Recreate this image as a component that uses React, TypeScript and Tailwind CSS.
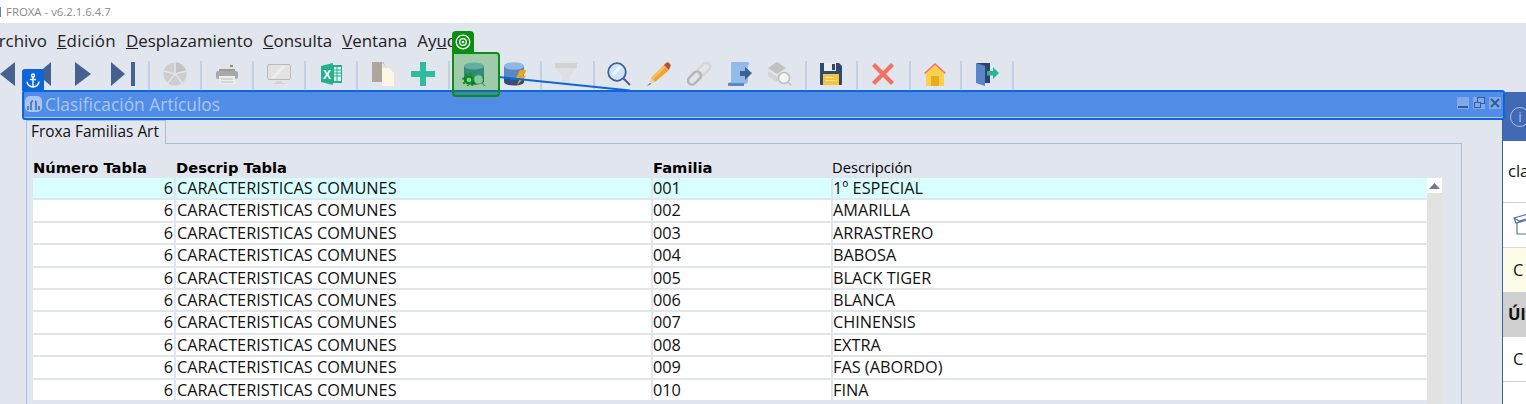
import React from "react";

const rows = [
  ["001", "1º ESPECIAL"],
  ["002", "AMARILLA"],
  ["003", "ARRASTRERO"],
  ["004", "BABOSA"],
  ["005", "BLACK TIGER"],
  ["006", "BLANCA"],
  ["007", "CHINENSIS"],
  ["008", "EXTRA"],
  ["009", "FAS (ABORDO)"],
  ["010", "FINA"],
];

const C = "#44618f";
const OPEN = { fontFamily: '"Open Sans", sans-serif' };
const DEJA = { fontFamily: '"DejaVu Sans", sans-serif' };

const Sep = ({ className }: { className: string }) => (
  <div className={`w-[2px] h-[28px] bg-[#c3cfe4] shrink-0 ${className}`} />
);

const Icon = ({ className, children }: { className: string; children: React.ReactNode }) => (
  <svg width="24" height="24" viewBox="0 0 24 24" fill="none" className={`shrink-0 -mt-[2px] ${className}`}>
    {children}
  </svg>
);

const Toolbar = () => (
  <div className="h-[31px] flex items-center -ml-[4px] shrink-0">
    <Icon className="">
      <path d="M19 0v24L4 12z" fill={C} />
    </Icon>
    <Icon className="ml-[12px]">
      <path d="M19 0v24L5 12z" fill={C} />
    </Icon>
    <Icon className="ml-[15px]">
      <path d="M4 0v24l16-12z" fill={C} />
    </Icon>
    <Icon className="ml-[16px]">
      <path d="M0 0v24l14-12z" fill={C} />
      <rect x="20" y="0" width="4" height="24" fill={C} />
    </Icon>
    <Sep className="ml-[13px]" />
    <Icon className="ml-[13px]">
      <circle cx="12" cy="12" r="11.500" fill="#cdcdcd" />
      <path d="M12 12V.5A11.500 11.500 0 0 1 23 9z" fill="#c2c2c2" />
      <path d="M12 12V0M12 12l11-3M12 12l8 10M12 12L4 22M12 12L1 9" stroke="#e1e5ee" strokeWidth="1.500" />
    </Icon>
    <Sep className="ml-[13px]" />
    <Icon className="ml-[13px]">
      <path d="M5 2h14v6H5z" fill="#e2e2e2" />
      <path d="M4 8h16" stroke="#9a9a9a" strokeWidth="2" />
      <rect x="1" y="9" width="22" height="8" rx="2" fill="#a8a8a8" />
      <rect x="15" y="3" width="3" height="2" fill="#8e8e8e" />
      <rect x="4" y="14" width="16" height="8" fill="#ececec" />
      <path d="M6 17h12M6 20h12" stroke="#bdbdbd" />
    </Icon>
    <Sep className="ml-[13px]" />
    <Icon className="ml-[13px]">
      <rect x=".5" y="2.500" width="23" height="15" rx="1.500" fill="#e3e3e3" stroke="#b9b9b9" />
      <path d="M4 16L15 4h4L8 16z" fill="#eeeeee" />
      <rect x="9" y="19" width="6" height="2" fill="#d4d4d4" />
      <rect x="6" y="21" width="12" height="1" fill="#d4d4d4" />
    </Icon>
    <Sep className="ml-[13px]" />
    <Icon className="ml-[13px]">
      <path d="M2 4l12-3v22L2 20z" fill="#23b08e" />
      <rect x="13" y="3" width="10" height="18" fill="#23b08e" />
      <rect x="15" y="5" width="7" height="14" fill="#e6f7f2" />
      <path d="M15 8h7M15 11h7M15 14h7M18 5v14" stroke="#23b08e" />
      <text x="4" y="16.500" fontSize="12" fontWeight="700" fill="#fff" fontFamily="Liberation Sans, sans-serif">X</text>
    </Icon>
    <Sep className="ml-[13px]" />
    <Icon className="ml-[13px]">
      <path d="M1 0h11l3 5v15H1z" fill="#aea69d" />
      <path d="M11 6h7l5 5v13H11z" fill="#fdf6e3" />
      <path d="M11 0l4 5v1h-4z" fill="#e1e5ee" />
    </Icon>
    <Icon className="ml-[16px]">
      <path d="M9 0h6v9h9v6h-9v9H9v-9H0V9h9z" fill="#30bb9f" />
    </Icon>
    <Sep className="ml-[13px]" />
    <Icon className="ml-[12px]">
      <path d="M2 4v15c0 2 5 3.500 10 3.500S22 21 22 19V4z" fill="#4a87a8" />
      <path d="M2 14c0 2 5 3.500 10 3.500S22 16 22 14v5c0 2-5 3.500-10 3.500S2 21 2 19z" fill="#1f4b78" />
      <ellipse cx="12" cy="4" rx="10" ry="3.500" fill="#86bde0" />
      <circle cx="7" cy="18" r="3.500" stroke="#0d8f1a" strokeWidth="2.500" fill="#cbe8c9" />
      <circle cx="7" cy="18" r="6" stroke="#0d8f1a" strokeWidth="1.800" strokeDasharray="2 2.700" />
      <circle cx="16.500" cy="17.500" r="4.500" fill="#b5ead0" stroke="#74b89a" />
      <path d="M20 21l3 3" stroke="#6d9d86" strokeWidth="1.300" />
    </Icon>
    <Icon className="ml-[16px]">
      <path d="M2 4v16c0 2 4 3.500 10 3.500S22 22 22 20V4z" fill="#33507c" />
      <path d="M2 4v10c0 2 4 3.500 10 3.500S22 16 22 14V4z" fill="#5d87c4" />
      <ellipse cx="12" cy="4" rx="10" ry="3.800" fill="#90b8e4" />
      <path d="M18 8h7l-4 6h3l-9 9 3-7h-4z" fill="#e9a71e" />
    </Icon>
    <Sep className="ml-[14px]" />
    <Icon className="ml-[12px]">
      <path d="M1 1h22v5l-7 7v9H8v-9L1 6z" fill="#dedfe2" />
      <rect x="1" y="1" width="22" height="5" fill="#d2d2d2" />
    </Icon>
    <Sep className="ml-[15px]" />
    <Icon className="ml-[12px]">
      <circle cx="10" cy="10" r="8.800" fill="#cfe4f8" stroke="#3f618f" strokeWidth="1.800" />
      <path d="M16.500 16.500l6.500 6.500" stroke="#3f618f" strokeWidth="2" />
      <path d="M5 12l7-8 3 1-8 9z" fill="#eef6fd" />
    </Icon>
    <Icon className="ml-[16px]">
      <path d="M4 16L17 3l5 5L8 20z" fill="#f0a332" />
      <path d="M4 16L17 3l2 2L6 18z" fill="#f6bf5a" />
      <path d="M17 3l2-2c1-1 2-1 3 0l1 1c1 1 1 2 0 3l-1 3z" fill="#b94e3e" />
      <path d="M4 16l4 4-5 2z" fill="#e8cfa8" />
      <path d="M0 24l3-3 1 1z" fill="#555" />
    </Icon>
    <Icon className="ml-[16px]">
      <rect x="10" y="3" width="14" height="8" rx="4" transform="rotate(-45 17 7)" stroke="#d6d6d6" strokeWidth="2.500" />
      <rect x="0" y="12" width="15" height="8" rx="4" transform="rotate(-45 7.500 16)" stroke="#b5b5b5" strokeWidth="2.500" />
    </Icon>
    <Icon className="ml-[17px]">
      <path d="M3 0h17l2 2-2 1v16c0 2-1 3-3 3H0c0-1 1-2 3-2z" fill="#93bae8" />
      <path d="M0 21h16v3H0z" fill="#5b87c5" />
      <path d="M12 9h5V5l7 6-7 7v-4h-5z" fill="#3f618f" />
    </Icon>
    <Icon className="ml-[16px]">
      <path d="M9 0l9 6-9 6-9-6z" fill="#c0c0c0" />
      <path d="M0 9l9 6 3-2v5l-3 2-9-6zM0 11" fill="#d4d4d4" />
      <circle cx="16" cy="16" r="5.500" fill="#f5f5f5" stroke="#bdbdbd" strokeWidth="1.500" />
      <path d="M20 20l3.500 3.500" stroke="#bdbdbd" strokeWidth="1.500" />
    </Icon>
    <Sep className="ml-[13px]" />
    <Icon className="ml-[12px]">
      <path d="M1 1h19l3 3v18a1 1 0 0 1-1 1H2a1 1 0 0 1-1-1z" fill="#32496e" />
      <rect x="5" y="1" width="12" height="8" fill="#ededed" />
      <rect x="13" y="2" width="3" height="6" fill="#32496e" />
      <rect x="4" y="12" width="16" height="11" fill="#f4c63f" />
      <rect x="6" y="15" width="9" height="1" fill="#fbe9a8" />
      <rect x="6" y="18" width="11" height="1" fill="#fbe9a8" />
    </Icon>
    <Sep className="ml-[13px]" />
    <Icon className="ml-[13px]">
      <path d="M4 1l8 8 8-8 3 3-8 8 8 8-3 3-8-8-8 8-3-3 8-8-8-8z" fill="#f07263" />
    </Icon>
    <Sep className="ml-[14px]" />
    <Icon className="ml-[12px]">
      <path d="M3 11v13h18V11L12 2z" fill="#fdd14d" />
      <path d="M1 11L12 1l11 10-1 1L12 3 2 12z" fill="#f07263" />
      <rect x="8" y="14" width="8" height="10" fill="#e4ae20" />
    </Icon>
    <Sep className="ml-[13px]" />
    <Icon className="ml-[13px]">
      <rect x="2" y="1" width="13" height="20" fill="#2f4468" />
      <path d="M1 1l9 3v20l-9-3z" fill="#5a85c8" />
      <path d="M12 9h6V5l6 6-6 6v-3.500h-6z" fill="#2ab798" />
    </Icon>
    <Sep className="ml-[13px]" />
  </div>
);

const Cell = ({ className = "", children }: { className?: string; children?: React.ReactNode }) => (
  <div className={`h-[20.400px] leading-[21px] overflow-hidden whitespace-nowrap ${className}`}>{children}</div>
);

export default function App() {
  return (
    <div
      className="relative w-[1526px] h-[404px] overflow-hidden bg-[#e1e5ee] flex flex-col text-black"
      style={OPEN}
    >
      {/* title */}
      <div className="h-[23px] bg-white flex items-center text-[11.400px] text-[#8a8a8a] shrink-0">
        <div className="w-[1px] h-[10px] bg-[#5a85c8] mr-[5px]" />
        <span>FROXA - v6.2.1.6.4.7</span>
      </div>

      {/* menu */}
      <div className="h-[36px] flex items-center text-[16.900px] text-[#222] shrink-0 -ml-[12px] gap-[10px] whitespace-nowrap">
        <span><u>A</u>rchivo</span>
        <span className="tracking-[0.3px]"><u>E</u>dición</span>
        <span><u>D</u>esplazamiento</span>
        <span><u>C</u>onsulta</span>
        <span><u>V</u>entana</span>
        <span>Ay<u>u</u>da</span>
      </div>

      <Toolbar />

      {/* body */}
      <div className="flex flex-1 min-h-0 items-start pl-[22px]">
        <div className="w-[1480px] shrink-0 flex flex-col h-full min-h-0 relative">
          <div className="h-[30px] -mr-[3px] bg-[#518ce6] border-[2px] border-[#0d65dc] rounded-[3px] shadow-[inset_0_-1px_0_#a9c9f7] flex items-center shrink-0 relative z-10">
            <svg width="17" height="16" viewBox="0 0 17 16" className="ml-[1px] mr-[3px] -mt-[2px]" fill="none">
              <rect width="17" height="16" rx="5" fill="#a9c6f2" />
              <path d="M3 14v-4M6 14V8c0-2 1-3 2-3M11 14V7c0-1 0-2-1-2M14 14v-4" stroke="#3e6db5" strokeWidth="1.600" />
            </svg>
            <span className="text-[17.400px] text-[#a8c7f6] -mt-[2px]">Clasificación Artículos</span>
            <div className="ml-auto flex gap-[4px] mr-[2px] -mt-[4px]">
              <div className="w-[12px] h-[12px] bg-[#82a8e8] flex items-end justify-center"><div className="w-[10px] h-[2px] bg-[#2f5da3] mb-[1px]" /></div>
              <div className="w-[12px] h-[12px] bg-[#82a8e8] relative">
                <div className="absolute right-[0px] top-[0px] w-[8px] h-[7px] border border-[#2f5da3]" />
                <div className="absolute left-[1px] bottom-[1px] w-[7px] h-[6px] border border-[#2f5da3] bg-[#82a8e8]" />
              </div>
              <div className="w-[12px] h-[12px] bg-[#82a8e8] flex items-center justify-center">
                <svg width="10" height="10" viewBox="0 0 10 10"><path d="M1 1l8 8M9 1l-8 8" stroke="#2f5da3" strokeWidth="2" /></svg>
              </div>
            </div>
          </div>

          {/* tab */}
          <div className="pl-[4px] flex-1 min-h-0 flex flex-col w-[1440px]">
            <div className="h-[24px] flex shrink-0">
              <div className="w-[140px] border border-b-0 border-[#a6bfdb] text-[15.400px] leading-[22px] pl-[4px] text-[#111] whitespace-nowrap">
                Froxa Familias Art
              </div>
              <div className="flex-1 border-b border-[#a6bfdb]" />
            </div>
            <div className="flex-1 border-l border-r border-[#a6bfdb] min-h-0 pl-[6px] overflow-hidden flex flex-col">
              <div className="h-[34px] pb-[1px] flex items-end shrink-0 leading-[18px] whitespace-nowrap">
                <div className="w-[143px] font-bold text-[14.700px] shrink-0" style={DEJA}>Número Tabla</div>
                <div className="w-[477px] font-bold text-[14.700px] shrink-0" style={DEJA}>Descrip Tabla</div>
                <div className="w-[179px] font-bold text-[14.700px] shrink-0" style={DEJA}>Familia</div>
                <div className="text-[14.700px] mb-[1px]">Descripción</div>
              </div>
              <div className="flex flex-1 min-h-0">
                <div className="w-[1394px] shrink-0 flex flex-col gap-[2px] text-[16.300px]">
                  {rows.map((r, i) => {
                    const bg = i === 0 ? "bg-[#d8fefe]" : "bg-white";
                    return (
                      <div key={r[0]} className="flex gap-[2px] shrink-0 text-[#111]">
                        <Cell className={`w-[141px] text-right pr-[1px] ${bg}`}>6</Cell>
                        <Cell className={`w-[475px] pl-[1px] ${bg}`}>CARACTERISTICAS COMUNES</Cell>
                        <Cell className={`w-[178px] ${bg}`}>{r[0]}</Cell>
                        <Cell className={`flex-1 ${bg}`}>{r[1]}</Cell>
                      </div>
                    );
                  })}
                </div>
                <div className="w-[15px] bg-[#e2e2e2] shrink-0">
                  <div className="h-[15px] bg-white flex items-center justify-center">
                    <svg width="11" height="6" viewBox="0 0 11 6"><path d="M0 6L5.500 0 11 6z" fill="#6f7a92" /></svg>
                  </div>
                </div>
              </div>
            </div>
          </div>
        </div>

        {/* right panel */}
        <div className="flex-1 min-w-0 h-[312px] mt-[2px] border-l-[1px] border-[#44618f] bg-white flex flex-col overflow-hidden text-[16.500px] text-[#111] whitespace-nowrap">
          <div className="h-[49px] bg-[#4169b4] shrink-0 flex items-center pl-[7px]">
            <div className="w-[20px] h-[20px] shrink-0 rounded-full border border-[#a8c0e4] text-[#a8c0e4] text-[14px] flex items-center justify-center">i</div>
          </div>
          <div className="h-[62px] shrink-0 pl-[5px] flex items-center border-b border-[#cfcfcf]">cla</div>
          <div className="h-[45px] shrink-0 pl-[10px] flex items-center border-b border-[#dcdcdc]">
            <svg width="20" height="26" viewBox="0 0 20 26" className="shrink-0" fill="none" stroke="#5a72a5" strokeWidth="1.200"><path d="M1 6l14-4 5 3-14 4zM1 6l2 5 15-4M4 11v11l16 0" /></svg>
          </div>
          <div className="h-[44px] shrink-0 pl-[10px] flex items-center bg-[#fefce9]">C</div>
          <div className="h-[45px] shrink-0 pl-[5px] flex items-center bg-[#d0d0d0] font-bold">Últ</div>
          <div className="h-[45px] shrink-0 pl-[10px] flex items-center border-b border-[#cfcfcf]">C</div>
        </div>
      </div>

      {/* overlays */}
      <div className="absolute left-[22px] top-[69px] w-[22px] h-[22px] bg-[#0d65dc] rounded-t-[3px] flex items-center justify-center">
        <svg width="14" height="15" viewBox="0 0 14 15" fill="none" stroke="#fff" strokeWidth="1.400">
          <circle cx="7" cy="2.500" r="1.500" />
          <path d="M7 4v10M4 6.500h6M1 8.500c0 3 3 5.500 6 5.500s6-2.500 6-5.500" />
        </svg>
      </div>
      <div className="absolute left-[452px] top-[31px] w-[22px] h-[21px] bg-[#0a9010] rounded-t-[4px] flex items-center justify-center">
        <svg width="16" height="16" viewBox="0 0 16 16" fill="none" stroke="#fff" strokeWidth="1.300">
          <circle cx="8" cy="8" r="6.800" />
          <circle cx="8" cy="8" r="3.300" />
          <circle cx="8" cy="8" r="0.700" fill="#fff" />
        </svg>
      </div>
      <div className="absolute left-[452px] top-[52px] w-[48px] h-[45px] rounded-[4px] rounded-tl-none border-[2px] border-[#0a9010] bg-[#0a9010]/30 z-20" />
      <svg className="absolute left-[499px] top-[75px]" width="131" height="16" viewBox="0 0 131 16">
        <path d="M0 2L131 15.500" stroke="#0d65dc" strokeWidth="2" />
      </svg>
    </div>
  );
}
